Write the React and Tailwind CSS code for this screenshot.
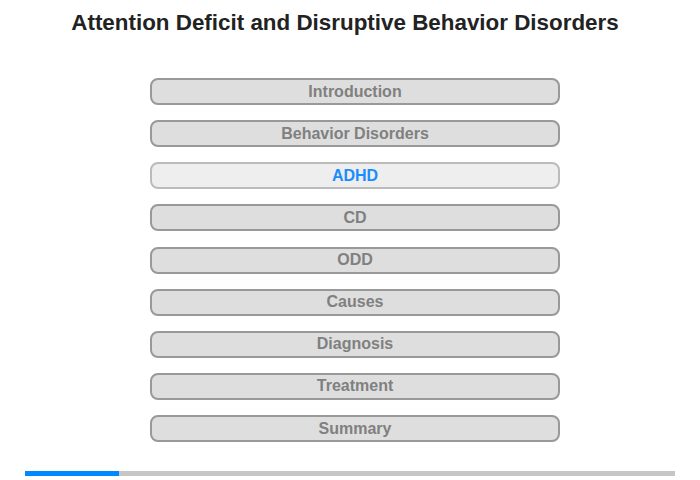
export default function App() {
  const items = ["Introduction", "Behavior Disorders", "ADHD", "CD", "ODD", "Causes", "Diagnosis", "Treatment", "Summary"];
  return (
    <div className="w-[700px] h-[480px] bg-white flex flex-col items-center" style={{ fontFamily: '"Liberation Sans", Arial, sans-serif' }}>
      <h1 className="mt-[10px] mr-[10px] text-[22.4px] leading-[26px] font-bold text-[#222222]">Attention Deficit and Disruptive Behavior Disorders</h1>
      <div className="mt-[42px] ml-[10px] flex flex-col gap-[15.125px]">
        {items.map((t) => {
          const active = t === "ADHD";
          return (
            <div
              key={t}
              className={
                active
                  ? "w-[410px] h-[27px] rounded-[8px] border-2 border-[#bbbbbb] bg-[#eeeeee] flex items-center justify-center text-[16px] font-bold text-[#1a8cff]"
                  : "w-[410px] h-[27px] rounded-[8px] border-2 border-[#999999] bg-[#dedede] flex items-center justify-center text-[16px] font-bold text-[#808080]"
              }
            >
              {t}
            </div>
          );
        })}
      </div>
      <div className="mt-[29px] w-[650px] h-[5px] bg-[#c6c6c6] flex">
        <div className="w-[94px] h-full bg-[#0088ff]" />
      </div>
    </div>
  );
}
